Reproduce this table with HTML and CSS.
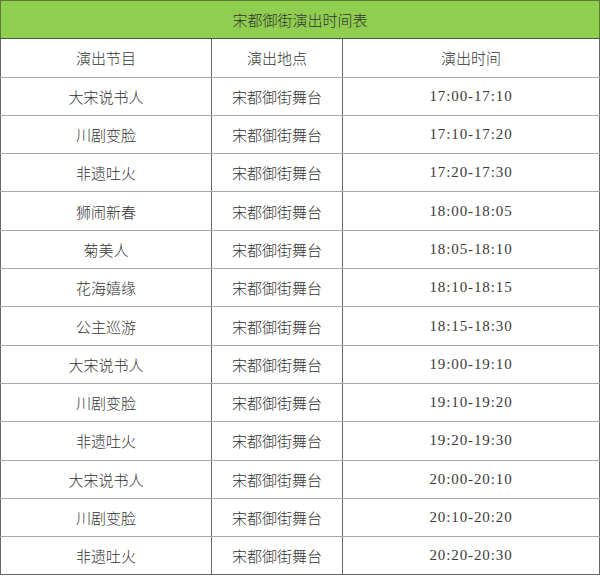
FILE: index.html
```html
<!DOCTYPE html>
<html lang="zh">
<head>
<meta charset="utf-8">
<title>宋都御街演出时间表</title>
<link rel="stylesheet" href="styles.css">
</head>
<body>
<table class="schedule">
  <colgroup>
    <col class="c1"><col class="c2"><col class="c3">
  </colgroup>
  <thead>
    <tr class="title-row"><th colspan="3">宋都御街演出时间表</th></tr>
    <tr class="head-row"><th>演出节目</th><th>演出地点</th><th>演出时间</th></tr>
  </thead>
  <tbody>
    <tr><td>大宋说书人</td><td>宋都御街舞台</td><td class="time">17:00-17:10</td></tr>
    <tr><td>川剧变脸</td><td>宋都御街舞台</td><td class="time">17:10-17:20</td></tr>
    <tr><td>非遗吐火</td><td>宋都御街舞台</td><td class="time">17:20-17:30</td></tr>
    <tr><td>狮闹新春</td><td>宋都御街舞台</td><td class="time">18:00-18:05</td></tr>
    <tr><td>菊美人</td><td>宋都御街舞台</td><td class="time">18:05-18:10</td></tr>
    <tr><td>花海嬉缘</td><td>宋都御街舞台</td><td class="time">18:10-18:15</td></tr>
    <tr><td>公主巡游</td><td>宋都御街舞台</td><td class="time">18:15-18:30</td></tr>
    <tr><td>大宋说书人</td><td>宋都御街舞台</td><td class="time">19:00-19:10</td></tr>
    <tr><td>川剧变脸</td><td>宋都御街舞台</td><td class="time">19:10-19:20</td></tr>
    <tr><td>非遗吐火</td><td>宋都御街舞台</td><td class="time">19:20-19:30</td></tr>
    <tr><td>大宋说书人</td><td>宋都御街舞台</td><td class="time">20:00-20:10</td></tr>
    <tr><td>川剧变脸</td><td>宋都御街舞台</td><td class="time">20:10-20:20</td></tr>
    <tr><td>非遗吐火</td><td>宋都御街舞台</td><td class="time">20:20-20:30</td></tr>
  </tbody>
</table>
</body>
</html>
```
FILE: styles.css
```css
html, body {
  margin: 0;
  padding: 0;
  background: #ffffff;
}
.schedule {
  width: 599px;
  height: 575px;
  border-collapse: collapse;
  table-layout: fixed;
  font-family: "Liberation Serif", "Noto Sans CJK SC", serif;
  font-size: 15px;
  font-weight: 300;
  color: #333333;
}
.c1 { width: 211px; }
.c2 { width: 131px; }
.c3 { width: 257px; }
.schedule tr { height: 38.3px; }
.schedule th,
.schedule td {
  padding: 0;
  text-align: center;
  vertical-align: middle;
  font-weight: 300;
  border-left: 1px solid #666666;
  border-right: 1px solid #666666;
  border-top: 1px solid #a8a8a8;
  border-bottom: 1px solid #a8a8a8;
}
.title-row th {
  background: #8fce4e;
  border: 1px solid #5a7a3a;
  border-bottom: 1px solid #4c5a40;
}
.schedule tbody tr:last-child td {
  border-bottom: 1px solid #666666;
}
.time {
  letter-spacing: 0.9px;
  color: #3a3a3a;
  font-weight: 400;
}
```
